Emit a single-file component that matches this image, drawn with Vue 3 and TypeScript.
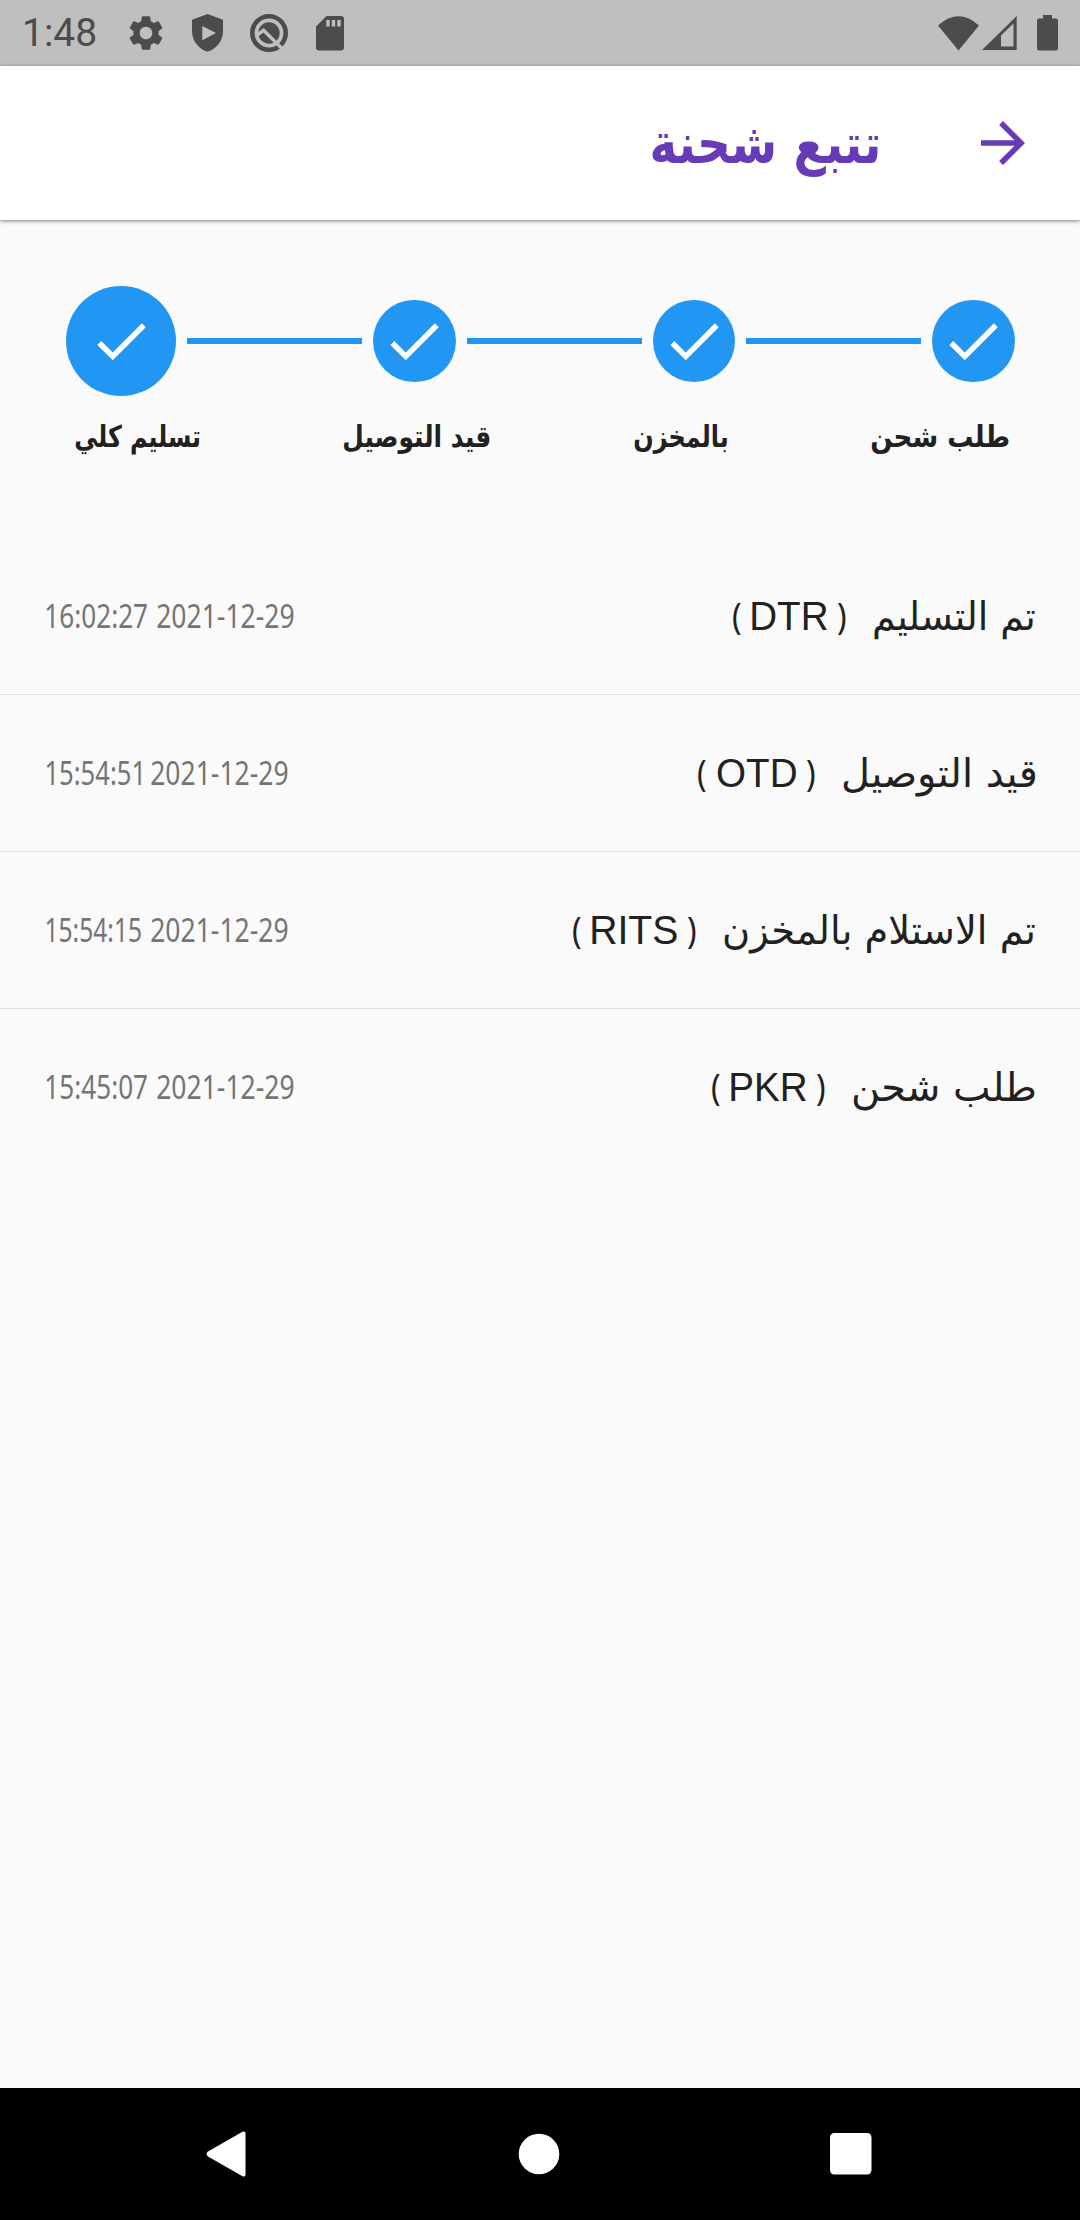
<script setup lang="ts">
interface Step {
  label: string
  width: number
  current?: boolean
}

interface Movement {
  status: string
  statusWidth: number
  code: string
  codeWidth: number
  time: string
  timeWidth: number
  date: string
}

const steps: Step[] = [
  { label: 'طلب شحن', width: 138 },
  { label: 'بالمخزن', width: 93 },
  { label: 'قيد التوصيل', width: 146 },
  { label: 'تسليم كلي', width: 125, current: true },
]

const movements: Movement[] = [
  { status: 'تم التسليم', statusWidth: 161, code: 'DTR', codeWidth: 75, time: '16:02:27', timeWidth: 101, date: '2021-12-29' },
  { status: 'قيد التوصيل', statusWidth: 192, code: 'OTD', codeWidth: 79, time: '15:54:51', timeWidth: 95, date: '2021-12-29' },
  { status: 'تم الاستلام بالمخزن', statusWidth: 311, code: 'RITS', codeWidth: 85, time: '15:54:15', timeWidth: 95, date: '2021-12-29' },
  { status: 'طلب شحن', statusWidth: 182, code: 'PKR', codeWidth: 75, time: '15:45:07', timeWidth: 101, date: '2021-12-29' },
]

// Scales a line of text horizontally so its ink spans its parent's box exactly.
const vFit = {
  mounted(el: HTMLElement) {
    const parent = el.parentElement as HTMLElement
    const target = parent.getBoundingClientRect().width
    const style = getComputedStyle(el)
    const ctx = document.createElement('canvas').getContext('2d')
    if (!ctx) return
    ctx.font = `${style.fontWeight} ${style.fontSize} ${style.fontFamily}`
    ctx.textAlign = 'left'
    ctx.direction = style.direction as CanvasDirection
    const m = ctx.measureText(el.textContent ?? '')
    const ink = m.actualBoundingBoxLeft + m.actualBoundingBoxRight
    const scale = target / ink
    el.style.transform = `translateX(${m.actualBoundingBoxLeft * scale}px) scaleX(${scale})`
  },
}
</script>

<template>
  <div class="screen" dir="rtl">
    <header class="status" dir="ltr">
      <span class="clock">1:48</span>
      <svg class="gear" width="42" height="42" viewBox="0 0 24 24">
        <path d="M19.14 12.94c.04-.3.06-.61.06-.94 0-.32-.02-.64-.07-.94l2.03-1.58c.18-.14.23-.41.12-.61l-1.92-3.32c-.12-.22-.37-.29-.59-.22l-2.39.96c-.5-.38-1.03-.7-1.62-.94l-.36-2.54c-.04-.24-.24-.41-.48-.41h-3.84c-.24 0-.43.17-.47.41l-.36 2.54c-.59.24-1.13.57-1.62.94l-2.39-.96c-.22-.08-.47 0-.59.22L2.74 8.87c-.12.21-.08.47.12.61l2.03 1.58c-.05.3-.09.63-.09.94s.02.64.07.94l-2.03 1.58c-.18.14-.23.41-.12.61l1.92 3.32c.12.22.37.29.59.22l2.39-.96c.5.38 1.03.7 1.62.94l.36 2.54c.05.24.24.41.48.41h3.84c.24 0 .44-.17.47-.41l.36-2.54c.59-.24 1.13-.56 1.62-.94l2.39.96c.22.08.47 0 .59-.22l1.92-3.32c.12-.22.07-.47-.12-.61l-2.01-1.58zM12 15.6c-1.98 0-3.6-1.62-3.6-3.6s1.62-3.6 3.6-3.6 3.6 1.62 3.6 3.6-1.62 3.6-3.6 3.6z" />
      </svg>
      <svg class="shield" width="31" height="38" viewBox="0 0 31 38">
        <path fill-rule="evenodd" d="M15.5 0 31 5.7V17c0 10-6.5 18-15.5 20.8C6.5 35 0 27 0 17V5.7zM10.3 12v14.2L24 19z" />
      </svg>
      <svg class="search" width="38" height="38" viewBox="0 0 38 38">
        <circle class="ring" cx="19" cy="19" r="16.7" />
        <circle cx="19" cy="19" r="10.7" />
        <path class="cut" d="M6 21.8 13.6 16.3 35 37.5" />
      </svg>
      <svg class="card" width="28" height="35" viewBox="0 0 28 35">
        <path fill-rule="evenodd" d="M10.5 0H25a3 3 0 0 1 3 3v28.5a3 3 0 0 1-3 3H3a3 3 0 0 1-3-3V10.5zM10.3 4v6.5h3.4V4zM15.8 4v6.5h3.4V4zM21.3 4v6.5h3.4V4z" />
      </svg>
      <span class="spacer"></span>
      <svg class="wifi" width="41" height="35" viewBox="0 0 41 35">
        <path d="M0 9.5Q20.5-9 41 9.5L20.5 34.5z" />
      </svg>
      <svg class="signal" width="35" height="34" viewBox="0 0 35 34">
        <path fill-rule="evenodd" d="M0 34 34.7 0v34zM19 19.5v11h12.5V7.5z" />
      </svg>
      <svg class="battery" width="21" height="36" viewBox="0 0 21 36">
        <path d="M6 0h9v3.5h4a2 2 0 0 1 2 2V33.5a2 2 0 0 1-2 2H2a2 2 0 0 1-2-2V5.5a2 2 0 0 1 2-2h4z" />
      </svg>
    </header>

    <div class="appbar">
      <svg class="back" width="66" height="66" viewBox="0 0 24 24">
        <path d="M12 4l-1.41 1.41L16.17 11H4v2h12.17l-5.58 5.59L12 20l8-8z" />
      </svg>
      <h1 class="title"><span v-fit class="fit">تتبع شحنة</span></h1>
    </div>

    <main class="content">
      <div class="stepper">
        <template v-for="(step, i) in steps" :key="step.label">
          <span v-if="i > 0" class="line"></span>
          <span class="dot" :class="{ current: step.current }">
            <svg width="66" height="66" viewBox="0 0 24 24">
              <path d="M9 16.17 4.83 12l-1.42 1.41L9 19 21 7l-1.41-1.41z" />
            </svg>
          </span>
        </template>
      </div>

      <div class="labels">
        <span v-for="step in steps" :key="step.label" class="label" :style="{ width: step.width + 'px' }">
          <span v-fit class="fit">{{ step.label }}</span>
        </span>
      </div>

      <ul class="list">
        <li v-for="row in movements" :key="row.code" class="row">
          <span class="status-name" :style="{ width: row.statusWidth + 'px' }"><span v-fit class="fit">{{ row.status }}</span></span>
          <span class="code" dir="ltr">
            <span class="paren"><span v-fit class="fit">(</span></span>
            <span class="code-name" :style="{ width: row.codeWidth + 'px' }"><span v-fit class="fit">{{ row.code }}</span></span>
            <span class="paren"><span v-fit class="fit">)</span></span>
          </span>
          <span class="stamp" dir="ltr">
            <span class="time" :style="{ width: row.timeWidth + 'px' }"><span v-fit class="fit">{{ row.time }}</span></span>
            <span class="date"><span v-fit class="fit">{{ row.date }}</span></span>
          </span>
        </li>
      </ul>
    </main>

    <nav class="navbar" dir="ltr">
      <svg width="42" height="46" viewBox="0 0 42 46">
        <path d="M2 20.5 36.5.8Q39.5-.5 39.5 2.5V43.5Q39.5 46.5 36.5 45.2L2 25.5Q-1 23 2 20.5z" />
      </svg>
      <svg width="42" height="42" viewBox="0 0 42 42"><circle cx="21" cy="21" r="20.3" /></svg>
      <svg width="42" height="42" viewBox="0 0 42 42"><rect width="41.5" height="41.5" rx="4.5" /></svg>
    </nav>
  </div>
</template>

<style>
body {
  background: #fafafa;
}
</style>

<style scoped>
.screen {
  display: flex;
  flex-direction: column;
  width: 1080px;
  height: 2220px;
  background: #fafafa;
  color: #212121;
  font-family: "DejaVu Sans", sans-serif;
  overflow: hidden;
}

.fit {
  display: inline-block;
  white-space: pre;
  transform-origin: 0 50%;
}

.status {
  display: flex;
  align-items: center;
  flex: none;
  box-sizing: border-box;
  height: 66px;
  padding: 0 22px;
  background: #bfbfbf;
}

.status svg {
  flex: none;
  fill: #4c4c4c;
}

.clock {
  width: 103px;
  font: 400 39px/66px Roboto, sans-serif;
  color: #4c4c4c;
}

.shield {
  margin-left: 25px;
}

.search {
  margin-left: 27px;
}

.search .ring {
  fill: none;
  stroke: #4c4c4c;
  stroke-width: 4.6;
}

.search .cut {
  fill: none;
  stroke: #bfbfbf;
  stroke-width: 3.4;
}

.card {
  margin-left: 28px;
}

.spacer {
  flex: 1;
}

.signal {
  margin-left: 3px;
}

.battery {
  margin-left: 20px;
}

.appbar {
  display: flex;
  align-items: center;
  flex: none;
  box-sizing: border-box;
  height: 154px;
  padding-right: 44px;
  background: #fff;
  box-shadow: 0 1px 4px rgba(0, 0, 0, 0.5);
}

.back {
  flex: none;
  fill: #673ab7;
}

.title {
  width: 226px;
  margin: 0 92px 0 0;
  padding-top: 2px;
  direction: ltr;
  font-size: 56px;
  font-weight: 700;
  line-height: 60px;
  color: #673ab7;
}

.content {
  flex: 1;
}

.stepper {
  display: flex;
  align-items: center;
  gap: 11px;
  height: 110px;
  padding: 66px 65.5px 0 66px;
}

.dot {
  display: flex;
  align-items: center;
  justify-content: center;
  flex: none;
  width: 82.5px;
  height: 82.5px;
  border-radius: 50%;
  background: #2196f3;
}

.dot.current {
  width: 110px;
  height: 110px;
}

.dot svg {
  fill: #fff;
}

.line {
  flex: 1;
  height: 5.5px;
  background: #2196f3;
}

.labels {
  display: flex;
  justify-content: space-between;
  padding: 21px 71px 0 74.5px;
}

.label {
  direction: ltr;
  font-size: 30px;
  font-weight: 700;
  line-height: 40px;
}

.list {
  margin: 81px 0 0;
  padding: 0;
  list-style: none;
}

.row {
  display: flex;
  align-items: center;
  box-sizing: border-box;
  height: 157px;
  padding: 0 45px 0 46px;
  border-bottom: 1px solid #e0e0e0;
}

.row:last-child {
  height: 155px;
  border-bottom: 0;
}

.status-name {
  padding-top: 2px;
  direction: ltr;
  font-size: 39px;
  line-height: 50px;
}

.code {
  display: flex;
  align-items: center;
  gap: 11px;
  margin-right: 28px;
  font: 400 41px/50px "Liberation Sans", sans-serif;
}

.paren {
  width: 8px;
  font: 400 36px/50px "Noto Sans", sans-serif;
}

.stamp {
  display: flex;
  gap: 10px;
  margin-right: auto;
  font: 400 32px/44px "Noto Sans", sans-serif;
  color: #757575;
}

.date {
  width: 136.5px;
}

.navbar {
  display: flex;
  align-items: center;
  justify-content: space-between;
  flex: none;
  box-sizing: border-box;
  height: 132px;
  padding: 0 208px 0 206px;
  background: #000;
}

.navbar svg {
  fill: #fff;
}
</style>
